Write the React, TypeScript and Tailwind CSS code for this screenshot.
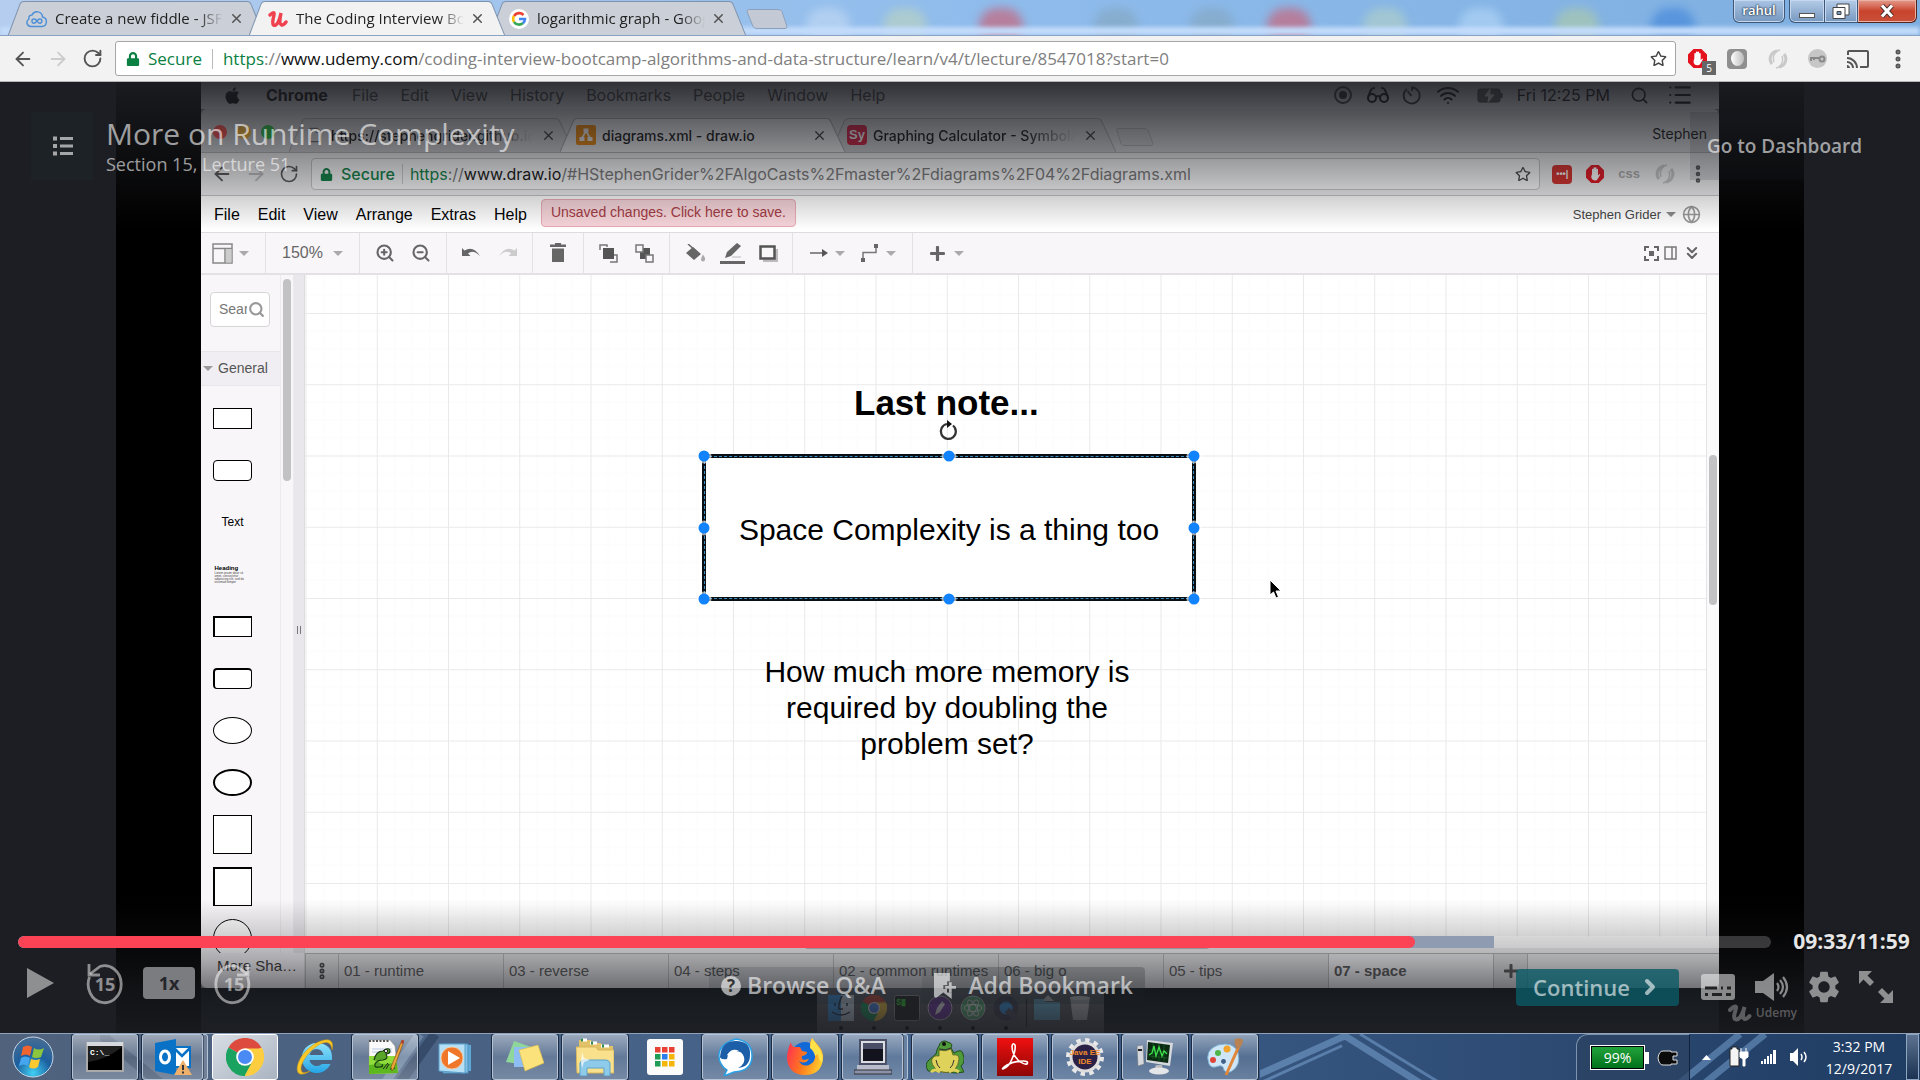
import React from "react";
import { FaApple, FaLock, FaRegStar, FaPlus } from "react-icons/fa";
import { MdCast, MdSettings } from "react-icons/md";
import {
  ArrowLeft,
  ArrowRight,
  RotateCw,
  EllipsisVertical,
  X,
  Search,
  Wifi,
  Globe,
  List,
  ZoomIn,
  ZoomOut,
  ChevronRight,
  ChevronsDown,
  Glasses,
  File as FileIcon,
} from "lucide-react";

type Kids = { children?: React.ReactNode };

/* ---------- shared pieces ---------- */

function TabShape({ fill, stroke }: { fill: string; stroke: string }) {
  return (
    <svg className="absolute inset-0 h-full w-full" viewBox="0 0 256 34" preserveAspectRatio="none" aria-hidden="true">
      <path d="M0 34 L12 3 Q13 .5 16 .5 H239 Q242 .5 243 3 L256 34" fill={fill} stroke={stroke} />
    </svg>
  );
}

function Swirl({ color }: { color: string }) {
  return (
    <svg width="22" height="22" viewBox="0 0 22 22" fill="none" stroke={color} strokeWidth="3" aria-hidden="true">
      <path d="M10 3a8 8 0 0 0-5 13M12 19a8 8 0 0 0 5-13" />
      <path d="M13 2c-5 1-8 6-6 12M9 20c5-1 8-6 6-12" strokeWidth="1.5" />
    </svg>
  );
}

function StopHand({ className }: { className: string }) {
  return (
    <svg className={className} viewBox="0 0 24 24" aria-hidden="true">
      <path d="M7 0h10l7 7v10l-7 7H7l-7-7V7z" fill="#e3121d" />
      <path d="M8 12V6a1 1 0 0 1 2 0v4V4a1 1 0 0 1 2 0v6V4a1 1 0 0 1 2 0v7V6a1 1 0 0 1 2 0v8l2-2q1.500 0 .5 1.500l-3 5q-1 2-3.500 2-5 0-5-5.500z" fill="#fff" />
    </svg>
  );
}

function Caret({ className = "border-t-[#aaa]" }: { className?: string }) {
  return <span className={`inline-block border-x-[5px] border-t-[5px] border-x-transparent ${className}`} />;
}

/* ---------- outer browser ---------- */

function OuterTab({ title, icon, active }: { title: string; icon: React.ReactNode; active?: boolean }) {
  return (
    <div role="tab" aria-selected={!!active} className={`relative -ml-[15px] h-[35px] w-64 ${active ? "z-10" : ""}`}>
      <TabShape fill={active ? "#f2f2f2" : "#cbd0d8"} stroke="#7f93ad" />
      <div className="relative flex h-full items-center pr-5 pl-[18px]">
        <span className="flex w-[22px] justify-center">{icon}</span>
        <span className="ml-[7px] flex-1 overflow-hidden whitespace-nowrap text-[15px] text-[#222] [mask-image:linear-gradient(to_right,#000_85%,transparent)]">
          {title}
        </span>
        <button aria-label={`Close ${title}`} className="ml-[6px] text-[#555]">
          <X size={15} strokeWidth={2.500} />
        </button>
      </div>
    </div>
  );
}

const blobs = [
  "left-[3%] bg-[#9fb2d8]",
  "left-[42%] bg-[#b9d4f2]",
  "left-[46%] bg-[#b3cfc9]",
  "left-[51%] bg-[#c0708a]",
  "left-[57%] bg-[#86aac8]",
  "left-[62%] bg-[#86aac8]",
  "left-[66%] bg-[#c0708a]",
  "left-[71%] bg-[#a9cbcd]",
  "left-[76%] bg-[#aad0f4]",
  "left-[81%] bg-[#a5c6b4]",
  "left-[86%] bg-[#4d8edb]",
];

function OuterTabStrip() {
  return (
    <div className="relative flex h-9 shrink-0 overflow-hidden border-b border-[#8aa3c4] bg-linear-to-r from-[#b5cdee] via-[#8fbcec] to-[#7daee0]">
      {blobs.map((b) => (
        <span key={b} className={`absolute top-2 h-9 w-11 rounded-full opacity-80 blur-[5px] ${b}`} />
      ))}
      <span className="absolute inset-x-0 bottom-0 h-2 bg-[#c3dcfb] blur-[2px]" />
      <div role="tablist" className="relative flex pt-px pl-[23px]">
        <OuterTab
          title="Create a new fiddle - JSFiddle"
          icon={
            <svg width="22" height="18" viewBox="0 0 22 18" fill="none" stroke="#4d8fd6" strokeWidth="1.400">
              <path d="M6 16.500H5a4 4 0 0 1-2-7.500A3 3 0 0 1 6 5a5.500 5.500 0 0 1 10.500 2A4.800 4.800 0 0 1 16 16.500z" />
              <path d="M11 11c-1-1.500-2-2-3-2a2 2 0 0 0 0 4.200c2.300 0 3.200-4.200 5.800-4.200a2 2 0 0 1 0 4.200c-1 0-2-.7-2.800-2.200z" />
            </svg>
          }
        />
        <OuterTab
          active
          title="The Coding Interview Bootcamp"
          icon={
            <svg width="20" height="18" viewBox="0 0 20 18" fill="none" stroke="#f0414f" strokeWidth="3.400" strokeLinecap="round">
              <path d="M2 5q3-3 4-2c1 2-3 9-.5 12 3 2 6-4 7.500-12-1 5-2 11 .5 12q2 .5 4.500-3" />
            </svg>
          }
        />
        <OuterTab
          title="logarithmic graph - Google Search"
          icon={
            <span className="flex h-5 w-5 items-center justify-center rounded-full bg-white">
              <svg width="16" height="16" viewBox="0 0 16 16" fill="none" strokeWidth="2.600">
                <path d="M12.500 4A6 6 0 0 0 3 5" stroke="#ea4335" />
                <path d="M3 5a6 6 0 0 0 0 6" stroke="#fbbc05" />
                <path d="M3 11a6 6 0 0 0 9 1" stroke="#34a853" />
                <path d="M12 12.200A6 6 0 0 0 14 8H8" stroke="#4285f4" />
              </svg>
            </span>
          }
        />
        <button aria-label="New tab" className="mt-2 h-5">
          <svg width="42" height="20" viewBox="0 0 42 20">
            <path d="M3 .5H32q3 0 4 2l5 15q0 2-2 2H11q-3 0-4-2l-6-15q0-2 2-2z" fill="#c3cad6" stroke="#8aa0bd" />
          </svg>
        </button>
      </div>
      <div className="absolute top-0 right-[3px] flex">
        <button className="mr-1 h-[23px] w-[52px] rounded-b-md border border-t-0 border-[#3f5878] bg-linear-to-b from-[#a9c4e4] to-[#7798bf] text-[13px] font-semibold text-white shadow-[inset_0_0_0_1px_#c5d8ef] [text-shadow:0_0_2px_#234,0_0_2px_#234]">
          rahul
        </button>
        <button aria-label="Minimize" className="flex h-[23px] w-9 items-end justify-center rounded-bl-md border border-t-0 border-[#3f5878] bg-linear-to-b from-[#b4cce8] to-[#7798bf] pb-1 shadow-[inset_0_0_0_1px_#c5d8ef]">
          <span className="h-[5px] w-4 border border-[#555] bg-white" />
        </button>
        <button aria-label="Restore" className="flex h-[23px] w-[33px] items-center justify-center border border-t-0 border-l-0 border-[#3f5878] bg-linear-to-b from-[#b4cce8] to-[#7798bf] shadow-[inset_0_0_0_1px_#c5d8ef]">
          <svg width="18" height="17" viewBox="0 0 18 17" stroke="#444" fill="#fff">
            <path d="M5 1h12v11H5z" />
            <path d="M1 4.500h12v11H1z" />
            <path d="M5 8.500h4v3H5z" fill="#7798bf" />
          </svg>
        </button>
        <button aria-label="Close window" className="flex h-[23px] w-[59px] items-center justify-center rounded-br-md border border-t-0 border-l-0 border-[#51241c] bg-linear-to-b from-[#e39a8c] via-[#c9432b] to-[#c8503a] shadow-[inset_0_0_0_1px_#eab1a5]">
          <svg width="16" height="14" viewBox="0 0 16 14" fill="none">
            <path d="M3 1.500l10 11M13 1.500l-10 11" stroke="#4a2a2a" strokeWidth="5" />
            <path d="M3 1.500l10 11M13 1.500l-10 11" stroke="#fff" strokeWidth="3.200" />
          </svg>
        </button>
      </div>
    </div>
  );
}

function OuterToolbar() {
  return (
    <div className="flex h-[46px] shrink-0 items-center border-b border-[#b5b5b5] bg-[#f2f2f2] pr-[10px] pl-3 text-[#555]">
      <button aria-label="Back"><ArrowLeft size={22} /></button>
      <button aria-label="Forward" className="ml-[13px] text-[#ccc]"><ArrowRight size={22} /></button>
      <button aria-label="Reload" className="ml-[13px]"><RotateCw size={21} strokeWidth={2.200} /></button>
      <div role="group" aria-label="Address bar" className="ml-3 flex h-[35px] flex-1 items-center rounded-[3px] border border-[#a6a6a6] bg-white pr-2 pl-[10px] text-[17px]">
        <FaLock size={14} className="text-[#0b8043]" />
        <span className="ml-2 text-[#0b8043]">Secure</span>
        <span className="mx-[10px] h-5 w-px bg-[#bbb]" />
        <span role="textbox" aria-label="Address" className="flex-1 whitespace-nowrap text-[#808080]">
          <span className="text-[#0b8043]">https</span>://<span className="text-[#111]">www.udemy.com</span>
          /coding-interview-bootcamp-algorithms-and-data-structure/learn/v4/t/lecture/8547018?start=0
        </span>
        <button aria-label="Bookmark this page" className="text-[#444]"><FaRegStar size={17} /></button>
      </div>
      <div className="ml-3 flex items-center">
        <button aria-label="Ad blocker, 5 blocked" className="relative mr-5">
          <StopHand className="h-[19px] w-[19px]" />
          <span className="absolute top-3 left-[14px] flex h-[14px] w-[14px] items-center justify-center bg-[#666] text-[10px] text-white">5</span>
        </button>
        <button aria-label="Shield extension" className="mr-5 flex h-5 w-5 items-center justify-center rounded-sm bg-[#8f8f8f]">
          <span className="h-[15px] w-[13px] rounded-[50%] bg-linear-to-r from-white to-[#bbb]" />
        </button>
        <button aria-label="Swirl extension" className="mr-[19px]"><Swirl color="#c9c9c9" /></button>
        <button aria-label="Key extension" className="mr-[19px] flex h-[19px] w-[19px] items-center justify-center rounded-full bg-[#c6c6c6]">
          <svg width="17" height="8" viewBox="0 0 17 8" fill="none" stroke="#888" strokeWidth="2"><path d="M1 3h10M2 3v3M5 3v2" /><circle cx="13" cy="4" r="2.500" /></svg>
        </button>
        <button aria-label="Cast"><MdCast size={24} /></button>
        <button aria-label="Browser menu" className="ml-4"><EllipsisVertical size={24} strokeWidth={3} /></button>
      </div>
    </div>
  );
}

/* ---------- recorded mac screen ---------- */

function MacMenuBar() {
  return (
    <div className="flex h-[27px] shrink-0 items-center bg-[#dcdde0] pr-[26px] pb-px pl-[22px] font-['Inter'] text-base text-[#333]">
      <FaApple size={19} className="mr-6 text-black" />
      <span className="mr-6 font-bold text-black">Chrome</span>
      <div className="flex gap-[22px]">
        {["File", "Edit", "View", "History", "Bookmarks", "People", "Window", "Help"].map((t) => (
          <button key={t}>{t}</button>
        ))}
      </div>
      <div className="ml-auto flex items-center text-black">
        <span className="mr-[14px] flex h-[18px] w-[18px] items-center justify-center rounded-full border-2 border-[#333]"><span className="h-2 w-2 rounded-sm bg-[#222]" /></span>
        <Glasses size={24} className="mr-3" />
        <svg width="19" height="19" viewBox="0 0 19 19" fill="none" stroke="#222" strokeWidth="1.800" className="mr-[15px]"><path d="M5 3a8 8 0 1 0 5-1.500V5M9.500 10L5.500 5" /></svg>
        <Wifi size={24} className="mr-[17px]" />
        <svg width="27" height="15" viewBox="0 0 27 15" className="mr-[13px]"><rect x="1" y="1" width="22" height="13" rx="2" fill="#555" stroke="#333" /><path d="M24.500 5v5" stroke="#333" strokeWidth="2" /><path d="M13 1l-5 7h4l-1 6 6-7h-4z" fill="#ddd" stroke="#ddd" /></svg>
        <span>Fri 12:25 PM</span>
        <Search size={19} className="ml-5" />
        <List size={26} className="ml-[18px]" />
      </div>
    </div>
  );
}

function MacTab({ title, icon, active, fade }: { title: string; icon: React.ReactNode; active?: boolean; fade?: boolean }) {
  return (
    <div role="tab" aria-selected={!!active} className={`relative -ml-[14px] h-[34px] w-[285px] ${active ? "z-10" : ""}`}>
      <TabShape fill={active ? "#f0f0f1" : "#cfcfd1"} stroke="#a9a9ab" />
      <div className="relative flex h-full items-center pr-[18px] pl-4">
        <span className="flex w-5 justify-center">{icon}</span>
        <span className={`ml-[6px] flex-1 overflow-hidden whitespace-nowrap font-['Inter'] text-[14px] font-medium text-[#111] ${fade ? "[mask-image:linear-gradient(to_right,#000_75%,transparent)]" : ""}`}>{title}</span>
        <button aria-label={`Close ${title}`} className="ml-2 text-[#333]"><X size={15} /></button>
      </div>
    </div>
  );
}

function MacBrowserChrome() {
  return (
    <>
      <div className="flex h-11 shrink-0 items-end rounded-t-md border-b border-[#b4b4b6] bg-[#d5d6d8] pr-3 pl-3">
        <div className="mb-[13px] flex gap-[10px]">
          <span className="h-[14px] w-[14px] rounded-full bg-[#ff4b47]" />
          <span className="h-[14px] w-[14px] rounded-full bg-[#ffb82d]" />
          <span className="h-[14px] w-[14px] rounded-full bg-[#22c03c]" />
        </div>
        <div role="tablist" className="ml-7 flex">
          <MacTab fade title="https://stephengrider.github.io" icon={<FileIcon size={16} className="text-[#666]" />} />
          <MacTab
            active
            title="diagrams.xml - draw.io"
            icon={
              <svg width="20" height="20" viewBox="0 0 20 20"><rect width="20" height="20" rx="2" fill="#f08705" /><path d="M10 6L6 13M10 6l4 7" stroke="#fff" strokeWidth="1.600" /><path d="M7.500 3.500h5v4h-5zM3.500 12h5v4h-5zM11.500 12h5v4h-5z" fill="#fff" /></svg>
            }
          />
          <MacTab fade title="Graphing Calculator - Symbolab" icon={<span className="flex h-5 w-5 items-center justify-center rounded-sm bg-[#d6193d] text-[13px] font-bold text-white">Sy</span>} />
          <button aria-label="Open tab" className="mt-[10px] h-[18px]">
            <svg width="38" height="18" viewBox="0 0 38 18"><path d="M2 .5H28q3 0 4 2l5 13q0 2-2 2H9q-3 0-4-2L1 3Q0 .5 2 .5z" fill="#d0d0d2" stroke="#b0b0b2" /></svg>
          </button>
        </div>
        <span className="mb-2 ml-auto font-['Inter'] text-[14px] text-[#111]">Stephen</span>
      </div>
      <div className="flex h-[43px] shrink-0 items-center border-b border-[#c3c3c5] bg-[#f0f0f1] pr-[10px] pl-[10px] text-[#555]">
        <button aria-label="Page back"><ArrowLeft size={22} /></button>
        <button aria-label="Page forward" className="ml-3 text-[#bbb]"><ArrowRight size={22} /></button>
        <button aria-label="Page reload" className="ml-3"><RotateCw size={20} /></button>
        <div role="group" aria-label="Page address bar" className="ml-3 flex h-8 flex-1 items-center rounded border border-[#c4c4c6] bg-[#fbfbfb] pr-2 pl-2 font-['Inter'] text-base">
          <FaLock size={13} className="text-[#0b8043]" />
          <span className="ml-2 font-medium text-[#0b8043]">Secure</span>
          <span className="mx-[7px] h-5 w-px bg-[#ccc]" />
          <span role="textbox" aria-label="Page address" className="flex-1 whitespace-nowrap text-[#777]">
            <span className="text-[#0b8043]">https</span>://<span className="text-[#111]">www.draw.io</span>/#HStephenGrider%2FAlgoCasts%2Fmaster%2Fdiagrams%2F04%2Fdiagrams.xml
          </span>
          <button aria-label="Star page" className="text-[#444]"><FaRegStar size={16} /></button>
        </div>
        <button aria-label="Password manager" className="ml-3 h-[19px] w-5 rounded-sm bg-[#d32d27] text-[9px] leading-3 font-bold text-white">•••|</button>
        <button aria-label="Blocker" className="ml-[14px]"><StopHand className="h-[18px] w-[18px]" /></button>
        <button className="ml-[14px] text-[13px] font-bold text-[#aaa]">css</button>
        <button aria-label="Swirl" className="ml-[14px]"><Swirl color="#c4c4c4" /></button>
        <button aria-label="Page menu" className="ml-[11px]"><EllipsisVertical size={22} strokeWidth={3} /></button>
      </div>
    </>
  );
}

function DrawMenuBar() {
  return (
    <div className="flex h-[37px] shrink-0 items-center border-b border-[#ddd] bg-white pt-px pr-[18px] pl-[13px] text-base text-black">
      <div className="flex gap-[18px]">
        {["File", "Edit", "View", "Arrange", "Extras", "Help"].map((t) => (
          <button key={t}>{t}</button>
        ))}
      </div>
      <button className="mb-1 ml-[14px] h-7 rounded border border-[#eba9b2] bg-[#f7d5da] px-[9px] text-[14px] whitespace-nowrap text-[#a43a42]">Unsaved changes. Click here to save.</button>
      <button className="ml-auto flex items-center gap-[5px] text-[13px] text-[#444]">
        Stephen Grider <Caret className="border-t-[#888]" />
      </button>
      <button aria-label="Language" className="ml-[6px] text-[#999]"><Globe size={19} /></button>
    </div>
  );
}

function ToolGroup({ children, className }: Kids & { className: string }) {
  return <div className={`flex h-full items-center border-r border-[#e3e1e5] ${className}`}>{children}</div>;
}

function DrawToolbar() {
  return (
    <div className="flex h-[42px] shrink-0 items-center border-b-2 border-[#e3e1e5] bg-[#f8f6f9] text-[#666]">
      <ToolGroup className="w-[65px] pl-[11px]">
        <button aria-label="View layout" className="flex items-center gap-[6px]">
          <svg width="21" height="21" viewBox="0 0 21 21" fill="none" stroke="#888" strokeWidth="1.500"><path d="M1 1h19v19H1zM1 5.500h19M13 5.500V20" /><path d="M14 6h5.500v13.500H14z" fill="#ccc" stroke="none" /></svg>
          <Caret />
        </button>
      </ToolGroup>
      <ToolGroup className="w-[94px] justify-center">
        <button className="flex items-center gap-[10px] text-base">150% <Caret /></button>
      </ToolGroup>
      <ToolGroup className="w-[87px] justify-center gap-4">
        <button aria-label="Zoom in"><ZoomIn size={20} strokeWidth={2.500} /></button>
        <button aria-label="Zoom out"><ZoomOut size={20} strokeWidth={2.500} /></button>
      </ToolGroup>
      <ToolGroup className="w-[86px] justify-center gap-[17px]">
        <button aria-label="Undo"><svg width="20" height="14" viewBox="0 0 20 14"><path d="M1 2l2.500 2.500Q12-1 19 10q-7-7-12-2.500L9.500 10H1z" fill="#666" /></svg></button>
        <button aria-label="Redo"><svg width="20" height="14" viewBox="0 0 20 14"><path d="M19 2l-2.500 2.500Q8-1 1 10q7-7 12-2.500L10.500 10H19z" fill="#ccc" /></svg></button>
      </ToolGroup>
      <ToolGroup className="w-[51px] justify-center">
        <button aria-label="Delete"><svg width="18" height="20" viewBox="0 0 18 20" fill="#666"><path d="M6 0h6v1.500h5V4H1V1.500h5zM3 5.500h12V19H3z" /></svg></button>
      </ToolGroup>
      <ToolGroup className="w-[86px] justify-center gap-[17px]">
        <button aria-label="To front"><svg width="19" height="19" viewBox="0 0 19 19" fill="none" stroke="#777" strokeWidth="1.500"><path d="M1 6V1h7v2M11 18h7v-7h-3" /><path d="M4 4h11v11H4z" fill="#555" stroke="none" /></svg></button>
        <button aria-label="To back"><svg width="19" height="19" viewBox="0 0 19 19" stroke="#777" strokeWidth="1.500"><path d="M5 4h10v11H5z" fill="#555" stroke="none" /><path d="M1 1h7v7H1zM11 11h7v7h-7z" fill="#f8f6f9" /></svg></button>
      </ToolGroup>
      <ToolGroup className="w-[123px] justify-center gap-[14px]">
        <button aria-label="Fill colour"><svg width="21" height="19" viewBox="0 0 21 19" fill="#666"><path d="M8 3l8 7-7 6-8-7z" /><path d="M3 0l9 8" stroke="#666" strokeWidth="1.500" /><path d="M18 10.500q2.500 3.500 2 5a2 2 0 0 1-4 0q0-2 2-5z" fill="#aaa" /></svg></button>
        <button aria-label="Line colour"><svg width="25" height="22" viewBox="0 0 25 22" fill="#666"><path d="M5 16l2-6L17 1l4 3L11 14z" /><path d="M12 15h9" stroke="#bbb" /><path d="M0 19h25v3H0z" /></svg></button>
        <button aria-label="Shadow"><svg width="19" height="17" viewBox="0 0 19 17"><path d="M4 4h15v13H4z" fill="#bbb" /><path d="M1.500 1.500h14v12h-14z" fill="#f8f6f9" stroke="#555" strokeWidth="2.500" /></svg></button>
      </ToolGroup>
      <ToolGroup className="w-[120px] justify-center gap-4">
        <button aria-label="Connection" className="flex items-center gap-[7px]"><svg width="18" height="8" viewBox="0 0 18 8"><path d="M0 4h13" stroke="#666" strokeWidth="1.500" /><path d="M12 0l6 4-6 4z" fill="#555" /></svg><Caret /></button>
        <button aria-label="Waypoints" className="flex items-center gap-[7px]"><svg width="18" height="18" viewBox="0 0 18 18" fill="#666"><path d="M2 15V8.500h13V3" fill="none" stroke="#777" strokeWidth="1.500" /><path d="M0 14h4v4H0zM13 0h4v4h-4z" /></svg><Caret /></button>
      </ToolGroup>
      <button aria-label="Insert" className="ml-4 flex items-center gap-2"><FaPlus size={17} /><Caret /></button>
      <div className="ml-auto flex items-center gap-[5px] pr-[17px]">
        <button aria-label="Fullscreen canvas"><svg width="15" height="15" viewBox="0 0 15 15" fill="none" stroke="#666" strokeWidth="2"><path d="M1 5V1h4M10 1h4v4M14 10v4h-4M5 14H1v-4" /><path d="M5 5h5v5H5z" fill="#666" stroke="none" /></svg></button>
        <button aria-label="Format panel"><svg width="13" height="14" viewBox="0 0 13 14" fill="none" stroke="#777" strokeWidth="1.500"><path d="M1 1h11v12H1zM8 1v12" /></svg></button>
        <button aria-label="Collapse"><ChevronsDown size={20} strokeWidth={2.500} /></button>
      </div>
    </div>
  );
}

const shapes = [
  "h-[21px] w-[39px] border",
  "h-[21px] w-[39px] border rounded-[4px]",
  "text",
  "heading",
  "h-[21px] w-[39px] border-t-2 border-l-2 border-r border-b",
  "h-[21px] w-[39px] border-t-2 border-l-2 border-r border-b rounded-[4px]",
  "h-[27px] w-[39px] border rounded-[50%]",
  "h-[27px] w-[39px] border-2 rounded-[50%]",
  "h-[39px] w-[39px] border",
  "h-[39px] w-[39px] border-t-2 border-l-2 border-r border-b",
  "h-[39px] w-[39px] border rounded-full",
];

function Sidebar() {
  return (
    <aside className="flex w-[103px] shrink-0 flex-col bg-[#f8f6f9]">
      <div className="flex min-h-0 flex-1">
        <div className="flex w-[79px] flex-col overflow-hidden">
          <label className="mt-[17px] mb-6 ml-[9px] flex h-[35px] w-[60px] shrink-0 items-center rounded border border-[#d5d5d5] bg-white pl-2">
            <input aria-label="Search shapes" placeholder="Search Shapes" className="w-7 min-w-0 text-[14px] placeholder:text-[#777]" />
            <Search size={17} strokeWidth={3} className="ml-px text-[#999]" />
          </label>
          <button className="flex h-[35px] shrink-0 items-center gap-[5px] border-y border-[#e8e6ea] bg-[#f0eef2] pl-[2px] text-[14px] text-[#555]">
            <Caret className="border-t-[#999]" /> General
          </button>
          <div className="flex flex-col pt-[6px]">
            {shapes.map((s) => (
              <div key={s} className="flex h-[52px] w-[63px] shrink-0 items-center justify-center">
                {s === "text" && <span className="text-[12px] text-black">Text</span>}
                {s === "heading" && (
                  <span className="w-9 text-[3px] leading-[3px] text-[#444]">
                    <b className="block text-[6px] leading-2 text-black">Heading</b>
                    Lorem ipsum dolor sit amet, consectetur adipisicing elit, sed do eiusmod tempor
                  </span>
                )}
                {s !== "text" && s !== "heading" && <span className={`border-black bg-white ${s}`} />}
              </div>
            ))}
          </div>
        </div>
        <div className="w-[14px] border-x border-[#eceaee] pt-1 pl-[2px]">
          <div className="h-[202px] w-2 rounded-full bg-[#c2c1c4]" />
        </div>
        <div className="flex flex-1 items-center justify-center bg-[#e9e7eb]"><span className="mt-8 h-2 w-1 border-x border-[#777]" /></div>
      </div>
      <button className="flex h-[35px] shrink-0 items-center overflow-hidden pb-[9px] pl-4 text-[15px] whitespace-nowrap text-[#333]">More Sha…</button>
    </aside>
  );
}

const handles = [
  "left-0 top-0", "left-1/2 top-0", "left-full top-0",
  "left-0 top-1/2", "left-full top-1/2",
  "left-0 top-full", "left-1/2 top-full", "left-full top-full",
];

function Canvas() {
  return (
    <main className="relative min-h-0 flex-1 overflow-hidden bg-white">
      <svg className="absolute inset-0 h-full w-full" aria-hidden="true">
        <defs>
          <pattern id="grid" width="71.25" height="71.25" x=".5" y="38" patternUnits="userSpaceOnUse">
            <path d="M17.800 0V71.250M35.600 0V71.250M53.400 0V71.250M0 17.800H71.250M0 35.600H71.250M0 53.400H71.250" stroke="#fbfbfb" />
            <path d="M.5 0V71.250M0 .5H71.250" stroke="#e9e9e9" />
          </pattern>
        </defs>
        <rect width="100%" height="100%" fill="url(#grid)" />
      </svg>
      <h1 className="absolute top-[108px] left-[549px] text-[35px] leading-10 font-bold text-black">Last note...</h1>
      <svg className="absolute top-[145px] left-[633px]" width="20" height="22" viewBox="0 0 20 22" fill="none" stroke="#333" strokeWidth="2.200">
        <path d="M15 5.500A7.500 7.500 0 1 1 9 4" /><path d="M9 0l5 4-5 4z" fill="#111" stroke="none" />
      </svg>
      <div className="absolute top-[181px] left-[399px] h-[143px] w-[490px]">
        <div className="absolute -inset-[2px] flex items-center justify-center border-4 border-[#0a0f14] bg-white pt-1 text-[30px] leading-9 text-black">Space Complexity is a thing too</div>
        <div className="absolute inset-0 border border-dashed border-[#3a8fc0]" />
        {handles.map((h) => (
          <span key={h} className={`absolute h-[11px] w-[11px] -translate-x-1/2 -translate-y-1/2 rounded-full bg-[#1283ff] ring-2 ring-white/60 ${h}`} />
        ))}
      </div>
      <p className="absolute top-[379px] left-[442px] w-[400px] text-center text-[30px] leading-9 text-black">
        How much more memory is required by doubling the problem set?
      </p>
      <svg className="absolute top-[304px] left-[964px]" width="14" height="21" viewBox="0 0 14 21">
        <path d="M1 1v15l3.500-3 2.500 6 2.500-1-2.500-6h5z" fill="#000" stroke="#fff" />
      </svg>
    </main>
  );
}

function PageTabs() {
  const tabs = ["01 - runtime", "03 - reverse", "04 - steps", "02 - common runtimes", "06 - big o", "05 - tips", "07 - space"];
  return (
    <div className="flex h-[35px] shrink-0 border-t border-[#b8b8ba] bg-[#e6e6e8] text-[15px] text-[#555]">
      <button aria-label="Pages" className="flex w-[34px] items-center justify-center border-x border-[#bbb] text-[#444]"><EllipsisVertical size={20} strokeWidth={4} /></button>
      {tabs.map((t) => (
        <button key={t} className={`w-[165px] border-r border-[#bbb] pl-[5px] text-left ${t === "07 - space" ? "bg-[#f6f6f8] font-bold" : ""}`}>{t}</button>
      ))}
      <button aria-label="Insert page" className="flex w-[34px] items-center justify-center border-r border-[#bbb]"><FaPlus size={16} /></button>
      <span className="flex-1 bg-[#f4f4f6]" />
    </div>
  );
}

function Dock() {
  const icon = "h-[26px] w-[26px]";
  const apps = [
    <svg className={icon} viewBox="0 0 26 26"><path d="M0 0h13v26H0z" fill="#3b9df0" /><path d="M13 0h13v26H13z" fill="#d8e6f4" /><path d="M7 8v3M19 8v3M4 17q9 6 18 0M14 1q-4 8-3 13h4" stroke="#234" fill="none" strokeWidth="1.500" /></svg>,
    <ChromeLogo className={icon} />,
    <svg className={icon} viewBox="0 0 26 26"><rect x=".5" y=".5" width="25" height="25" rx="2" fill="#222" stroke="#999" /><text x="2" y="10" fontSize="9" fontWeight="bold" fill="#3d3" fontFamily="Liberation Mono">$▮</text></svg>,
    <svg className={icon} viewBox="0 0 26 26"><circle cx="13" cy="13" r="12" fill="#7a3bb0" stroke="#ddd" /><path d="M8 20l2-7 5-7 3 3-5 8z" fill="#fff" /></svg>,
    <svg className={icon} viewBox="0 0 26 26"><circle cx="13" cy="13" r="12" fill="#5fc27e" stroke="#ddd" /><g fill="none" stroke="#fff"><ellipse cx="13" cy="13" rx="9" ry="3.500" /><ellipse cx="13" cy="13" rx="9" ry="3.500" transform="rotate(60 13 13)" /><ellipse cx="13" cy="13" rx="9" ry="3.500" transform="rotate(120 13 13)" /></g></svg>,
    <svg className={icon} viewBox="0 0 26 26"><circle cx="13" cy="13" r="9.500" fill="#3aa0f0" stroke="#445" strokeWidth="6" /><path d="M14 15l10 9" stroke="#556" strokeWidth="6" /></svg>,
  ];
  return (
    <div className="flex h-[45px] shrink-0 justify-center bg-linear-to-b from-[#0a1012] to-[#1b2428]">
      <div className="flex w-[287px] items-start justify-center gap-[7px] bg-[#5a5f66] pt-[7px]">
        {apps.map((a, i) => (
          <span key={i} className="flex flex-col items-center gap-[5px]">
            {a}
            <span className="h-1 w-1 rounded-full bg-black" />
          </span>
        ))}
        <span className="mt-1 h-7 w-px bg-[#222]" />
        <svg className={icon} viewBox="0 0 26 26"><path d="M8 6l6-6 6 6z" fill="#ddd" /><path d="M0 4h9l3 3h14v18H0z" fill="#6fb9dc" /></svg>
        <svg className={icon} viewBox="0 0 26 26"><path d="M3 2h20l-3 23H6z" fill="#c8cacc" /><ellipse cx="13" cy="3" rx="10" ry="2" fill="#eee" /></svg>
      </div>
    </div>
  );
}

function MacScreen() {
  return (
    <div className="isolate flex min-w-0 flex-1 flex-col bg-[#85868a]">
      <MacMenuBar />
      <div className="flex min-h-0 flex-1 flex-col overflow-hidden rounded-b-md">
        <MacBrowserChrome />
        <DrawMenuBar />
        <DrawToolbar />
        <div className="flex min-h-0 flex-1">
          <Sidebar />
          <div className="flex min-w-0 flex-1 flex-col border-l border-[#ddd]">
            <div className="flex min-h-0 flex-1">
              <Canvas />
              <div className="w-[13px] border-l border-[#e5e3e7] bg-[#fafafa] pt-[180px] pl-[2px]">
                <div className="h-[150px] w-2 rounded-full bg-[#c2c1c4]" />
              </div>
            </div>
            <div className="flex h-4 shrink-0 items-center justify-center bg-[#fafafa] pr-[10px]"><span className="h-2 w-[406px] rounded-full bg-[#c2c1c4]" /></div>
            <PageTabs />
          </div>
        </div>
      </div>
      <Dock />
    </div>
  );
}

/* ---------- player controls ---------- */

function Skip({ flip }: { flip?: boolean }) {
  return (
    <svg width="38" height="44" viewBox="0 0 38 44" aria-hidden="true">
      <g fill="none" stroke="currentColor" strokeWidth="2.800" transform={flip ? "translate(38 0) scale(-1 1)" : undefined}>
        <path d="M4.500 16A16.500 18.500 0 1 0 15 5.500L5 13" /><path d="M4 3v11h11" />
      </g>
      <text x="20" y="30" textAnchor="middle" fontSize="18" fontWeight="700" fill="currentColor">15</text>
    </svg>
  );
}

function PlayerOverlay() {
  return (
    <div className="absolute inset-0 flex flex-col justify-between">
      <div className="flex h-[148px] items-start bg-linear-to-b from-[#1d1e23]/90 to-[#1d1e23]/0 px-[31px] pt-[30px] text-white/60">
        <button aria-label="Course contents" className="flex h-[68px] w-[62px] items-center justify-center bg-[#1d2d33]/30">
          <svg width="21" height="20" viewBox="0 0 21 20" fill="none" stroke="currentColor" strokeWidth="3"><path d="M8 2.500h13M8 10h13M8 17.500h13" /><path d="M1 2.500h4M1 10h4M1 17.500h4" strokeWidth="4" /></svg>
        </button>
        <div className="ml-[13px] pt-1">
          <h2 className="text-[30px] leading-9">More on Runtime Complexity</h2>
          <p className="text-[18px] leading-6">Section 15, Lecture 51</p>
        </div>
        <button className="mr-3 ml-auto h-[68px] w-[187px] bg-[#1d2328]/15 pl-[2px] text-[19px] font-semibold">Go to Dashboard</button>
      </div>
      <div className="flex h-[148px] flex-col bg-[linear-gradient(to_bottom,transparent_10%,rgba(29,30,35,.2)_34%,rgba(29,30,35,.35)_50%,rgba(29,30,35,.6)_70%,rgba(29,30,35,.85))] pt-[47px]">
        <div className="flex h-5 items-center pr-2 pl-[18px]">
          <div className="relative mr-5 flex h-3 flex-1 overflow-hidden rounded-full bg-white/20">
            <span className="absolute inset-y-0 left-0 w-[84.2%] bg-[#8f9bb0]" />
            <span className="absolute inset-y-0 left-0 w-[79.7%] rounded-full bg-[#fb4355]" />
            <input type="range" aria-label="Seek" min={0} max={719} defaultValue={573} className="absolute inset-0 w-full opacity-0" />
          </div>
          <span className="w-[121px] text-center text-[21px] font-bold whitespace-nowrap text-white/90 [text-shadow:0_0_3px_#000]">09:33/11:59</span>
        </div>
        <div className="relative flex h-[70px] items-start text-white/50">
          <div className="mt-[9px] flex flex-1 items-center pl-[27px]">
            <button aria-label="Play"><svg width="27" height="30" viewBox="0 0 27 30" fill="currentColor"><path d="M0 0l27 15L0 30z" /></svg></button>
            <button aria-label="Rewind 15 seconds" className="ml-[31px]"><Skip /></button>
            <button className="ml-5 h-8 w-[52px] rounded bg-[#7b7c7f] text-[18px] font-bold text-[#25262b]">1x</button>
            <button aria-label="Forward 15 seconds" className="ml-[19px]"><Skip flip /></button>
          </div>
          <div className="mt-[15px] mr-[66px] flex h-[37px] text-[23px] font-semibold text-white/60">
            <button className="flex w-[213px] items-center gap-[6px] bg-[#1d2328]/15 px-3 whitespace-nowrap">
              <span className="flex h-5 w-5 items-center justify-center rounded-full bg-white/60 text-[17px] font-bold text-[#333]">?</span>
              Browse Q&amp;A
            </button>
            <button className="flex w-[223px] items-center gap-3 rounded-r bg-[#1d2328]/25 px-3 whitespace-nowrap">
              <svg width="24" height="28" viewBox="0 0 24 28" fill="currentColor"><path d="M0 0h17v9h-3v4h-4v4h4v4h5v7l-9-7-8 6-2-2z" fillRule="evenodd" /><path d="M16 10h3v4h5v3h-5v4h-3v-4h-4v-3h4z" /></svg>
              Add Bookmark
            </button>
          </div>
          <div className="mt-4 flex flex-1 items-center justify-end pr-[27px]">
            <button className="flex h-[37px] w-[163px] items-center justify-center gap-2 rounded-sm bg-[#0a5a66]/80 text-[22px] font-semibold text-white/60">
              Continue <ChevronRight size={24} strokeWidth={4} />
            </button>
            <button aria-label="Captions" className="ml-[22px]"><svg width="34" height="26" viewBox="0 0 34 26"><rect width="34" height="26" rx="3" fill="currentColor" /><path d="M4 14h12M20 14h2M26 14h4M4 20.500h3M11 20.500h10M25 20.500h5" stroke="#222" strokeWidth="3" /></svg></button>
            <button aria-label="Volume" className="ml-[19px]"><svg width="35" height="30" viewBox="0 0 35 30" fill="none" stroke="currentColor" strokeWidth="2.200"><path d="M1 9h8L20 1v28L9 21H1z" fill="currentColor" stroke="none" /><path d="M23 11q3 4 0 8M26 8q6 7 0 14M29 5q8 10 0 20" /></svg></button>
            <button aria-label="Settings" className="ml-4"><MdSettings size={38} /></button>
            <button aria-label="Fullscreen" className="ml-4"><svg width="34" height="34" viewBox="0 0 34 34" fill="currentColor"><path d="M0 1h13L8.500 5.500 15 12l-4 4-6.500-6.500L0 14zM34 33H21l4.500-4.500L19 22l4-4 6.500 6.500L34 20z" /></svg></button>
          </div>
          <div className="absolute right-[123px] bottom-0 flex items-center gap-1 text-[12px] font-semibold text-white/30">
            <svg width="24" height="18" viewBox="0 0 24 18" fill="none" stroke="currentColor" strokeWidth="4" strokeLinecap="round"><path d="M2 6q5-5 6-3c1 2-4 9-1 12 4 2 8-5 9.500-12-2 6-2 11 0 12q2 .5 5-3" /></svg>
            Udemy
          </div>
        </div>
      </div>
    </div>
  );
}

/* ---------- windows taskbar ---------- */

function ChromeLogo({ className }: { className?: string }) {
  return (
    <svg className={className} viewBox="0 0 38 38" aria-hidden="true">
      <path d="M19 19L2.500 9.500A19 19 0 0 1 35.500 9.500z" fill="#dd4b3e" />
      <path d="M19 19L35.500 9.500A19 19 0 0 1 19 38z" fill="#fdcd40" />
      <path d="M19 19v19A19 19 0 0 1 2.500 9.500z" fill="#1aa260" />
      <path d="M19 10.500h17.200Q37 12 37.500 14L26 24z" fill="#fdcd40" />
      <path d="M26.400 23.200L18.500 38q-2 0-3-.4L17 27z" fill="#1aa260" />
      <circle cx="19" cy="19" r="8.800" fill="#fff" />
      <circle cx="19" cy="19" r="7" fill="#4a8af4" />
    </svg>
  );
}

const cls = "h-[38px] w-[38px]";

function svg(children: React.ReactNode) {
  return <svg className={cls} viewBox="0 0 38 38" aria-hidden="true">{children}</svg>;
}

const taskIcons: { name: string; style: "plain" | "open" | "active" | "stack"; icon: React.ReactNode }[] = [
  {
    name: "Command prompt", style: "open",
    icon: svg(<><path d="M1 5h36v28H1z" fill="#000" stroke="#aaa" strokeWidth="2" /><path d="M1 4h36v4H1z" fill="#d5d9dd" /><path d="M2 24Q20 22 36 9V8H2z" fill="#fff" opacity=".12" /><text x="4" y="17" fontSize="8" fontWeight="bold" fill="#fff" fontFamily="Liberation Mono">C:\_</text></>),
  },
  {
    name: "Outlook", style: "stack",
    icon: svg(<><path d="M20 9h16v20H20z" fill="#fff" stroke="#0a72c6" strokeWidth="2" /><path d="M20 10l8 8 8-8" fill="none" stroke="#0a72c6" strokeWidth="2.500" /><path d="M1 5l21-4v36L1 33z" fill="#0a72c6" /><ellipse cx="11" cy="19" rx="4.500" ry="6" fill="none" stroke="#fff" strokeWidth="3" /><path d="M29 22l9 15H20z" fill="#eeb06a" /><path d="M29 27v5M29 33.500v2" stroke="#333" strokeWidth="2" /></>),
  },
  { name: "Chrome", style: "active", icon: <ChromeLogo className={cls} /> },
  {
    name: "Internet Explorer", style: "plain",
    icon: svg(<>
      <defs><linearGradient id="ie" x1="0" y1="0" x2="0" y2="1"><stop offset="0" stopColor="#8fe3fb" /><stop offset="1" stopColor="#24a5e6" /></linearGradient></defs>
      <path d="M20 5a15 15 0 1 0 14.500 21h-8.500a7.500 7.500 0 0 1-12.500-4H36Q37 5 20 5zm-6.500 12q1.500-6 7-6t7 6z" fill="url(#ie)" />
      <path d="M36 12C40-3 24 0 12 11S-1 35 4 36q4 1 10-3-6 3-8 1C3 30 7 21 15 13S35-1 36 12z" fill="#f8c728" stroke="#c9930d" strokeWidth=".5" />
    </>),
  },
  {
    name: "Notepad++", style: "open",
    icon: svg(<>
      <path d="M3 2h21l5 6 3 27-29 1z" fill="#fafafa" stroke="#888" strokeWidth=".5" />
      <path d="M3 18h27l1 17-28 1z" fill="#8fdc3a" /><path d="M3 27l28-2 1 10-29 1z" fill="#5cb81e" />
      <path d="M3 3h21" stroke="#555" strokeWidth="2" strokeDasharray="2 1.500" />
      <path d="M6 11h20M6 14h20" stroke="#b8c8e8" />
      <path d="M8 22q2-9 9-9l3-2q4-1 4 2t-4 3q3 5-3 6-6 0-8 4-1 4 4 3 5 0 3-3" fill="#5aa62a" stroke="#173a10" strokeWidth="1.200" />
      <circle cx="20" cy="13" r="1.600" fill="#fff" stroke="#222" /><path d="M17 31l5-6M20 31l3-5M24 31l5-1" stroke="#222" />
      <path d="M36 2l2 1-10 27-2 3-1-4z" fill="#f0a63a" stroke="#7a4a10" strokeWidth=".6" /><path d="M36 2l2 1-1 3-2-1z" fill="#b8372e" />
    </>),
  },
  {
    name: "Media Player", style: "plain",
    icon: svg(<><path d="M10 7h25v26H10z" fill="#5ea9d8" /><path d="M7 6h25v29H7z" fill="#7fc2e6" stroke="#5190bd" /><path d="M3 6h26v29l-26-2z" fill="#b4dff4" stroke="#5c9fc9" /><circle cx="16" cy="20" r="11" fill="#f0772a" stroke="#fbd0a8" strokeWidth=".8" /><path d="M12 13v14l12-7z" fill="#fff" /></>),
  },
  {
    name: "Sticky Notes", style: "open",
    icon: svg(<><path d="M8 3l17 6-6 18L0 24z" fill="#8fd69a" /><path d="M8 9h18v20H8z" fill="#8dbdf2" /><path d="M13 12l19-5 6 18-19 8z" fill="#fbe27a" stroke="#d9bb4a" strokeWidth=".6" /></>),
  },
  {
    name: "Explorer", style: "open",
    icon: svg(<><path d="M3 2h12l1 3h9l1 3h11v24H3z" fill="#e2c268" /><path d="M5 2h6M14 5h7M25 8h8" stroke="#fff" strokeWidth="3" /><path d="M5 2h2M15 5h2M26 8h2" stroke="#2f8a4a" strokeWidth="3" /><path d="M0 9h20l2 3h16v23H1z" fill="#f8e08c" stroke="#d8b65a" /><path d="M4 25q1-3 4-3h22q3 0 4 3v13h-6v-8H11v8H4z" fill="#8ecbea" stroke="#5aa3cc" /><path d="M6 14l2 6 6 2-6 2-2 6-1-6" fill="#fff" opacity=".7" /></>),
  },
  {
    name: "Apps", style: "plain",
    icon: svg(<><rect x="1" y="1" width="36" height="36" rx="3" fill="#fbfbfb" />{["#e94235", "#e94235", "#e94235", "#1f9d57", "#2b7de9", "#f6b50b", "#1f9d57", "#f6b50b", "#f6b50b"].map((c, i) => <rect key={i} x={9 + (i % 3) * 7} y={9 + Math.floor(i / 3) * 7} width="5.500" height="5.500" fill={c} />)}</>),
  },
  {
    name: "Messenger", style: "open",
    icon: svg(<><path d="M20 1q16 2 16 17T18 34l-10 4 3-6Q2 26 3 16T20 1z" fill="#fff" stroke="#2aa0e6" strokeWidth="1.500" /><path d="M4 19Q5 3 20 3t14 14q0 12-12 13 8-4 6-11-2-7-10-6-6 1-7 8-6 1-7-2z" fill="#1d5ea8" /><path d="M11 17q5-8 12-4-7-1-9 6z" fill="#fff" /></>),
  },
  {
    name: "Firefox", style: "open",
    icon: svg(<>
      <defs><linearGradient id="fox" x1="0" y1=".3" x2="1" y2=".6"><stop offset="0" stopColor="#ff3350" /><stop offset=".5" stopColor="#ff7a1c" /><stop offset="1" stopColor="#ffcf2e" /></linearGradient></defs>
      <circle cx="19" cy="17" r="13" fill="#1469d8" />
      <path d="M5 4q0 4 3 5l6 0 2 4 5 1q0 3-5 4-1 3 2 4l5-1q-4 6-10 2 3 6 10 4 7-3 6-11-1-5-5-8 0-5 2-8 3 4 6 7 6 7 5 14-2 16-18 16T1 21Q1 12 5 4z" fill="url(#fox)" />
      <path d="M26 0q3 4 6 8 6 8 4 17-4-4-4-9l-3 2q-1-5-5-8 0-6 2-10z" fill="#ffe24a" />
    </>),
  },
  {
    name: "PuTTY", style: "stack",
    icon: svg(<><path d="M5 1h28v26H5z" fill="#4a5166" /><path d="M7 3h24v22H7z" fill="#dcdde3" /><path d="M9 5h20v18H9z" fill="#4a4d66" /><path d="M9 11h20v12H9z" fill="#12131c" /><path d="M3 27h32v5H3z" fill="#b8bccb" /><path d="M0 32h38v4H0z" fill="#8b91ab" stroke="#333" /></>),
  },
  {
    name: "Toad", style: "open",
    icon: svg(<>
      <path d="M2 33Q-2 26 3 22l7-6q1-6 3-8 1-5 6-5l5 2q3 1 1 5l3 5q8-5 9 1 3 8-2 12l3 6-8 1-24-2z" fill="#4f9a3a" stroke="#234d1a" />
      <path d="M13 12q6 2 12-1l2 6q6-1 6 4t-5 12q-8 3-16 0Q4 26 6 21q2-4 7-3z" fill="#dfd25a" stroke="#55601c" strokeWidth=".8" />
      <path d="M5 34q4-4 9 0M23 34q5-4 10 0" stroke="#dfd25a" strokeWidth="3" fill="none" />
      <circle cx="18" cy="6" r="2" fill="#111" /><path d="M13 11q7 2 12-1M10 22q1 6 4 8M28 22q-1 6-4 8" stroke="#333" fill="none" />
    </>),
  },
  {
    name: "Acrobat", style: "open",
    icon: svg(<><defs><linearGradient id="pdf" x1="0" y1="0" x2="0" y2="1"><stop offset="0" stopColor="#f01010" /><stop offset="1" stopColor="#8d0606" /></linearGradient></defs><path d="M1 0h36v38H1z" fill="url(#pdf)" /><path d="M7 31q6-2 9-10 4-9 3-14-2-3-3 1 0 8 6 14 6 5 9 4 2-3-4-3-9 0-16 4-6 4-4 4z" fill="none" stroke="#fff" strokeWidth="1.600" /></>),
  },
  {
    name: "Eclipse", style: "open",
    icon: svg(<><circle cx="19" cy="19" r="16.500" fill="none" stroke="#e8e8e8" strokeWidth="5" strokeDasharray="4.300 4.300" /><circle cx="19" cy="19" r="14" fill="#2b2147" stroke="#ddd" strokeWidth="3" /><text x="19" y="17" textAnchor="middle" fontSize="8" fontWeight="bold" fill="#f08a2c" fontFamily="Liberation Sans">Java EE</text><text x="19" y="26" textAnchor="middle" fontSize="8" fontWeight="bold" fill="#f08a2c" fontFamily="Liberation Sans">IDE</text></>),
  },
  {
    name: "Monitor", style: "open",
    icon: svg(<><path d="M1 8l6-1 1 19-6 2z" fill="#d4d7dc" stroke="#777" strokeWidth=".5" /><path d="M2 12h4" stroke="#222" strokeWidth="2" /><path d="M11 2l26 3-3 23-24-4z" fill="#d5d8dc" /><path d="M12 4l22 3-2 18-21-3z" fill="#0b2a12" /><path d="M13 12l19 2M13 18l18 2M17 5v16M23 6v17M28 7v16" stroke="#1e6b2b" strokeWidth=".6" /><path d="M13 17l3-2 2-7 2 10 3-9 3 9 2-5 3 3" fill="none" stroke="#3ce04a" strokeWidth="1.300" /><path d="M20 27h6l1 5H18z" fill="#bbb" /><ellipse cx="23" cy="33" rx="10" ry="3.500" fill="#e4e6e8" /></>),
  },
  {
    name: "Paint", style: "open",
    icon: svg(<><path d="M3 26Q-2 12 12 7q16-4 20 8 3 12-6 18-6 3-8-1-1-5-5-4-8 3-10-2z" fill="#cfe6f6" stroke="#7fb2d6" /><circle cx="7" cy="22" r="3" fill="#e0453a" /><circle cx="12" cy="15" r="3" fill="#4fb54a" /><circle cx="21" cy="11" r="3.500" fill="#f2a52a" /><path d="M18 21a2.500 2.500 0 1 1-1 0" fill="#41618a" /><path d="M33 8L20 37" stroke="#e0873a" strokeWidth="3" /><path d="M29 1q6-2 8 1-1 8-6 9-3-3-2-10z" fill="#b98252" /></>),
  },
];

function Taskbar() {
  return (
    <footer className="relative flex h-[47px] shrink-0 overflow-hidden border-t border-[#8fa3bd] bg-linear-to-r from-[#50627c] via-[#42628c] to-[#1f3c63] text-white">
      <svg className="absolute inset-y-0 right-0 h-full w-[660px]" viewBox="0 0 660 47" preserveAspectRatio="none" aria-hidden="true">
        <g fill="none" stroke="#86b4e2" opacity=".45" strokeWidth="7"><path d="M-20 50L85 2l78 50" /><path d="M0 50L82 12M100 0l80 50" strokeWidth="3" /><path d="M420 50L480 0M445 50L505 0" /></g>
      </svg>
      <svg className="absolute inset-y-0 left-[100px] h-full w-[400px]" viewBox="0 0 400 47" preserveAspectRatio="none" aria-hidden="true">
        <g fill="none" stroke="#b9cfe6" opacity=".3" strokeWidth="9"><path d="M285 50L320 0" /></g>
        <g fill="none" stroke="#22344f" opacity=".5" strokeWidth="10"><path d="M300 50L335 0M0 0l60 50" /></g>
      </svg>
      <button aria-label="Start" className="relative ml-3 flex w-[42px] items-center justify-center">
        <svg width="42" height="44" viewBox="0 0 42 42">
          <defs><radialGradient id="orb" cx=".5" cy=".9" r=".9"><stop offset="0" stopColor="#3fd0f5" /><stop offset=".5" stopColor="#1d5f9e" /><stop offset="1" stopColor="#4a6d92" /></radialGradient></defs>
          <circle cx="21" cy="21" r="20" fill="url(#orb)" stroke="#c4d6e6" />
          <path d="M11 11q5-3 9 0l-2 9q-4-3-9 0z" fill="#f0642f" /><path d="M22 12q4 3 10 0l-3 9q-5 2-9 0z" fill="#8cc63e" />
          <path d="M9 22q4-3 9 0l-2 8q-4-3-9 0z" fill="#45a5ee" /><path d="M19 23q5 2 9 0l-2 8q-5 3-9 0z" fill="#fcc931" />
        </svg>
      </button>
      <nav aria-label="Taskbar" className="relative ml-[18px] flex gap-1">
        {taskIcons.map(({ name, style, icon }) => (
          <div key={name} className="flex w-[66px]">
            <button
              aria-label={name}
              className={`flex h-[46px] flex-1 items-center justify-center rounded-[3px] ${
                style === "plain"
                  ? ""
                  : style === "active"
                    ? "border border-white bg-linear-to-br from-[#d9dee4] to-[#a9b4c1]"
                    : "border border-[#b4c3d6] bg-linear-to-b from-white/45 via-white/15 to-white/25 shadow-[0_0_0_1px_#1d2c42]"
              }`}
            >
              {icon}
            </button>
            {style === "stack" && <span className="h-[46px] w-[5px] rounded-r-[3px] border border-l-0 border-[#b4c3d6] bg-white/20" />}
          </div>
        ))}
      </nav>
      <div className="relative ml-auto flex">
        <div className="flex w-[114px] items-center rounded-tl-xl border-t border-x border-[#7d93ae] border-r-[#12233d] bg-[#2c4362]/70 pl-[13px]">
          <span className="flex h-[25px] w-[55px] items-center justify-center border border-white bg-linear-to-b from-[#22a53c] to-[#00701a] text-[14px] shadow-[inset_0_0_0_1px_#000]">99%</span>
          <span className="h-3 w-1 bg-white" />
          <svg width="22" height="18" viewBox="0 0 22 18" className="ml-2" fill="#0a0a0a" stroke="#ddd"><path d="M6 2h8v1h6v4h-4v4h4v4h-6v1H6Q2 16 1 9 2 2 6 2z" /></svg>
        </div>
        <button aria-label="Show hidden icons" className="ml-3 self-center"><svg width="9" height="5" viewBox="0 0 9 5" fill="#fff"><path d="M4.500 0L9 5H0z" /></svg></button>
        <svg width="20" height="22" viewBox="0 0 20 22" className="ml-[18px] self-center"><path d="M3 1h5v2h2v17H1V3h2z" fill="#f4f4f4" stroke="#222" /><path d="M12 2v4M17 2v4M11 6h8v5l-3 2v7h-2v-7l-3-2z" fill="#fff" stroke="#fff" /></svg>
        <svg width="16" height="14" viewBox="0 0 16 14" className="ml-3 self-center" fill="#fff"><path d="M0 11h2v3H0zM3 9h2v5H3zM6 6h2v8H6zM9 4h2v10H9zM12 0h3v14h-3z" /></svg>
        <svg width="19" height="20" viewBox="0 0 19 20" className="ml-3 self-center" fill="none" stroke="#fff" strokeWidth="1.500"><path d="M1 6h3l5-5v18l-5-5H1z" fill="#fff" stroke="none" /><path d="M12 7q2 3 0 6M15 5q4 5 0 10" /></svg>
        <button className="w-[98px] pt-px pl-1 text-center text-[14px] leading-[22px]">3:32 PM<br />12/9/2017</button>
        <button aria-label="Show desktop" className="mr-px w-[13px] border border-[#90a6c0] bg-linear-to-b from-[#5d7391] to-[#1c3252]" />
      </div>
    </footer>
  );
}

export default function App() {
  return (
    <div className="flex h-screen flex-col overflow-hidden font-['Open_Sans',sans-serif]">
      <OuterTabStrip />
      <OuterToolbar />
      <section aria-label="Lecture video" className="relative flex min-h-0 flex-1 overflow-hidden bg-black">
        <div className="w-[116px] shrink-0 bg-[#1d1e23]" />
        <div className="w-[85px] shrink-0" />
        <div className="flex min-w-0 flex-1 font-['Liberation_Sans',Arial,sans-serif]"><MacScreen /></div>
        <div className="w-[85px] shrink-0" />
        <div className="w-[116px] shrink-0 bg-[#1d1e23]" />
        <PlayerOverlay />
      </section>
      <Taskbar />
    </div>
  );
}
